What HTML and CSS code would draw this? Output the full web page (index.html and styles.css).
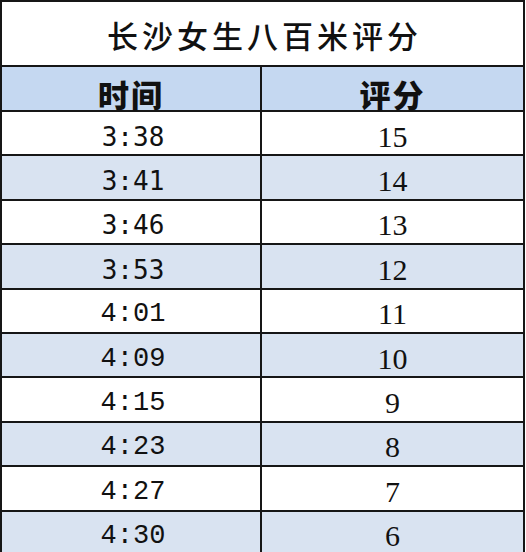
FILE: index.html
```html
<!DOCTYPE html>
<html lang="zh">
<head>
<meta charset="utf-8">
<title>长沙女生八百米评分</title>
<link rel="stylesheet" href="styles.css">
</head>
<body>
<div class="sheet">
  <div class="title">长沙女生八百米评分</div>
  <div class="row head">
    <div class="cell">时间</div>
    <div class="cell">评分</div>
  </div>
  <div class="row"><div class="cell time sans">3:38</div><div class="cell score">15</div></div>
  <div class="row alt"><div class="cell time sans">3:41</div><div class="cell score">14</div></div>
  <div class="row"><div class="cell time sans">3:46</div><div class="cell score">13</div></div>
  <div class="row alt"><div class="cell time sans">3:53</div><div class="cell score">12</div></div>
  <div class="row"><div class="cell time">4:01</div><div class="cell score">11</div></div>
  <div class="row alt"><div class="cell time">4:09</div><div class="cell score">10</div></div>
  <div class="row"><div class="cell time">4:15</div><div class="cell score">9</div></div>
  <div class="row alt"><div class="cell time">4:23</div><div class="cell score">8</div></div>
  <div class="row"><div class="cell time">4:27</div><div class="cell score">7</div></div>
  <div class="row alt"><div class="cell time">4:30</div><div class="cell score">6</div></div>
</div>
</body>
</html>
```
FILE: styles.css
```css
html, body {
  margin: 0;
  padding: 0;
  background: #ffffff;
}
.sheet {
  width: 525px;
  box-sizing: border-box;
  border: 2px solid #161616;
  border-bottom: none;
  color: #111111;
}
.title {
  height: 65px;
  border-bottom: 2px solid #161616;
  display: flex;
  align-items: center;
  justify-content: center;
  padding-top: 2px;
  padding-left: 4px;
  box-sizing: border-box;
  font-family: "Noto Sans CJK SC", sans-serif;
  font-weight: 500;
  font-size: 31px;
  letter-spacing: 4px;
  background: #ffffff;
}
.row {
  display: grid;
  grid-template-columns: 260px 1fr;
  height: 44.4px;
  box-sizing: border-box;
  border-bottom: 2px solid #161616;
  background: #ffffff;
}
.row.alt {
  background: #d9e3f1;
}
.row.head {
  height: 45px;
  background: #c5d8f1;
}
.cell {
  display: flex;
  align-items: center;
  justify-content: center;
  padding-top: 7px;
  box-sizing: border-box;
}
.cell:first-child {
  border-right: 2px solid #161616;
}
.head .cell {
  font-family: "Noto Sans CJK SC", sans-serif;
  font-weight: 900;
  font-size: 31px;
  padding-top: 4px;
  letter-spacing: 2px;
}
.time {
  font-family: "Liberation Mono", monospace;
  font-size: 27px;
  padding-left: 4px;
}
.time.sans {
  font-family: "DejaVu Sans Mono", monospace;
  font-size: 26px;
}
.score {
  font-family: "Liberation Serif", serif;
  font-size: 30px;
}
```
